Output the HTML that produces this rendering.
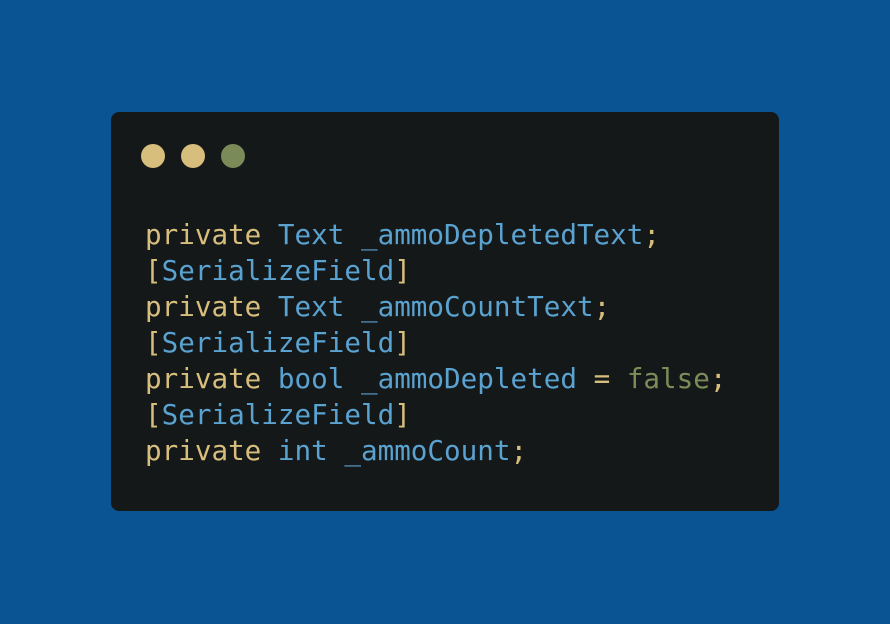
<!DOCTYPE html><html><head><style>
body{margin:0;width:890px;height:624px;background:#0a5494;position:relative;overflow:hidden}
.card{position:absolute;left:111px;top:112px;width:668px;height:399px;background:#141819;border-radius:8px}
.d{position:absolute;top:144px;width:24px;height:24px;border-radius:50%}
pre{position:absolute;left:145px;top:217px;margin:0;font:27.6px/36px "DejaVu Sans Mono","Liberation Mono",monospace;color:#5aa2d0}
.y{color:#d7be7c}.g{color:#7d8b58}
</style></head><body>
<div class="card"></div>
<div class="d" style="left:141px;background:#d7be7c"></div>
<div class="d" style="left:181px;background:#d7be7c"></div>
<div class="d" style="left:221px;background:#7a8a58"></div>
<pre><span class="y">private</span> Text _ammoDepletedText<span class="y">;</span>
<span class="y">[</span>SerializeField<span class="y">]</span>
<span class="y">private</span> Text _ammoCountText<span class="y">;</span>
<span class="y">[</span>SerializeField<span class="y">]</span>
<span class="y">private</span> bool _ammoDepleted <span class="y">=</span> <span class="g">false</span><span class="y">;</span>
<span class="y">[</span>SerializeField<span class="y">]</span>
<span class="y">private</span> int _ammoCount<span class="y">;</span></pre>
</body></html>
